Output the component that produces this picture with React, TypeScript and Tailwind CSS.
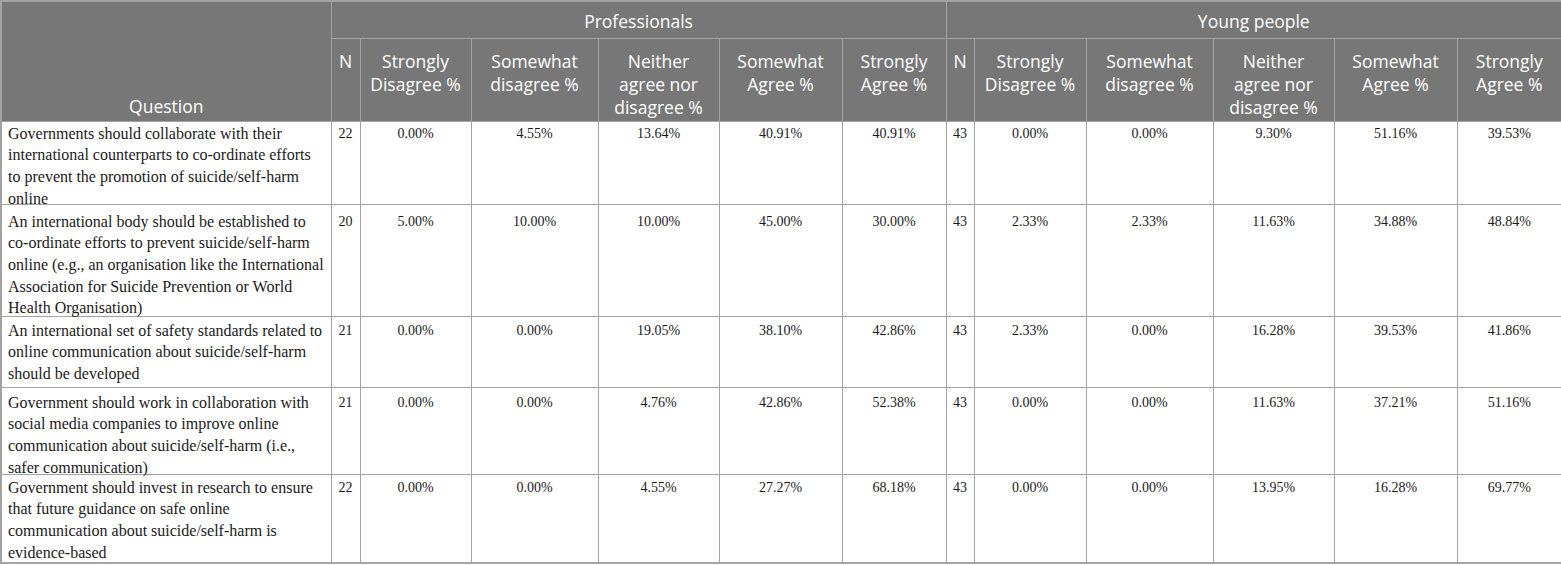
const colWidths = [330, 29, 111, 127, 121, 123, 104, 28, 112, 127, 121, 123, 105];

const subHeads = [
  ["N"],
  ["Strongly", "Disagree %"],
  ["Somewhat", "disagree %"],
  ["Neither", "agree nor", "disagree %"],
  ["Somewhat", "Agree %"],
  ["Strongly", "Agree %"],
];

type Row = { lines: string[]; h: string; pt: string; pro: string[]; young: string[] };

const rows: Row[] = [
  {
    lines: [
      "Governments should collaborate with their",
      "international counterparts to co-ordinate efforts",
      "to prevent the promotion of suicide/self-harm",
      "online",
    ],
    h: "h-[83px]",
    pt: "pt-[1px]",
    pro: ["22", "0.00%", "4.55%", "13.64%", "40.91%", "40.91%"],
    young: ["43", "0.00%", "0.00%", "9.30%", "51.16%", "39.53%"],
  },
  {
    lines: [
      "An international body should be established to",
      "co-ordinate efforts to prevent suicide/self-harm",
      "online (e.g., an organisation like the International",
      "Association for Suicide Prevention or World",
      "Health Organisation)",
    ],
    h: "h-[112px]",
    pt: "pt-[6px]",
    pro: ["20", "5.00%", "10.00%", "10.00%", "45.00%", "30.00%"],
    young: ["43", "2.33%", "2.33%", "11.63%", "34.88%", "48.84%"],
  },
  {
    lines: [
      "An international set of safety standards related to",
      "online communication about suicide/self-harm",
      "should be developed",
    ],
    h: "h-[71px]",
    pt: "pt-[3px]",
    pro: ["21", "0.00%", "0.00%", "19.05%", "38.10%", "42.86%"],
    young: ["43", "2.33%", "0.00%", "16.28%", "39.53%", "41.86%"],
  },
  {
    lines: [
      "Government should work in collaboration with",
      "social media companies to improve online",
      "communication about suicide/self-harm (i.e.,",
      "safer communication)",
    ],
    h: "h-[87px]",
    pt: "pt-[4px]",
    pro: ["21", "0.00%", "0.00%", "4.76%", "42.86%", "52.38%"],
    young: ["43", "0.00%", "0.00%", "11.63%", "37.21%", "51.16%"],
  },
  {
    lines: [
      "Government should invest in research to ensure",
      "that future guidance on safe online",
      "communication about suicide/self-harm is",
      "evidence-based",
    ],
    h: "h-[89px]",
    pt: "pt-[2px]",
    pro: ["22", "0.00%", "0.00%", "4.55%", "27.27%", "68.18%"],
    young: ["43", "0.00%", "0.00%", "13.95%", "16.28%", "69.77%"],
  },
];

const line = "border border-[#a3a3a3]";
const headCell =
  line + " bg-[#777777] text-white font-normal text-center align-top px-1 leading-[23px]";

export default function App() {
  return (
    <div className="bg-white w-[1561px] h-[565px]">
      <table className="w-[1561px] table-fixed border-collapse border-2 border-[#a3a3a3] font-['Open_Sans',sans-serif] text-[17.5px]">
        <colgroup>
          {colWidths.map((w, i) => (
            <col key={i} style={{ width: w }} />
          ))}
        </colgroup>
        <thead>
          <tr className="h-[37px]">
            <th
              rowSpan={2}
              className={line + " bg-[#777777] text-white font-normal text-center align-bottom pb-[3px] leading-[23px]"}
            >
              Question
            </th>
            <th colSpan={6} className={headCell + " pt-[8px]"}>
              Professionals
            </th>
            <th colSpan={6} className={headCell + " pt-[8px]"}>
              Young people
            </th>
          </tr>
          <tr className="h-[83px]">
            {[...subHeads, ...subHeads].map((lines, i) => (
              <th key={i} className={headCell + " pt-[11px]"}>
                {lines.map((l) => (
                  <span key={l} className="block whitespace-nowrap">
                    {l}
                  </span>
                ))}
              </th>
            ))}
          </tr>
        </thead>
        <tbody className="font-['Liberation_Serif',serif] text-[#1a1a1a]">
          {rows.map((r, i) => (
            <tr key={i} className={r.h}>
              <td className={`${line} align-top pl-[6px] pr-1 ${r.pt} text-[16px] leading-[21.7px]`}>
                <div className="h-[40px]">
                  {r.lines.map((l) => (
                    <span key={l} className="block whitespace-nowrap">
                      {l}
                    </span>
                  ))}
                </div>
              </td>
              {[...r.pro, ...r.young].map((v, j) => (
                <td key={j} className={`${line} text-center align-top ${r.pt} text-[14px] leading-[21.7px]`}>
                  {v}
                </td>
              ))}
            </tr>
          ))}
        </tbody>
      </table>
    </div>
  );
}
